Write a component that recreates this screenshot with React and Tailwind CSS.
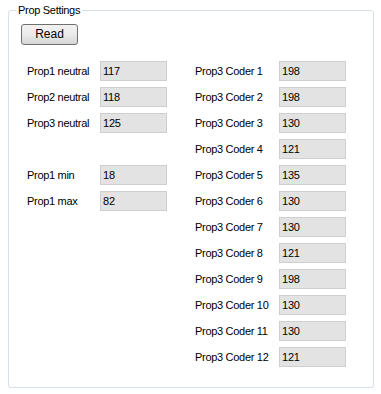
import React from 'react';

const leftRows = [
  { label: 'Prop1 neutral', value: '117' },
  { label: 'Prop2 neutral', value: '118' },
  { label: 'Prop3 neutral', value: '125' },
  null,
  { label: 'Prop1 min', value: '18' },
  { label: 'Prop1 max', value: '82' },
];

const coderValues = ['198', '198', '130', '121', '135', '130', '130', '121', '198', '130', '130', '121'];

// read-only WinForms style textbox
const Field = ({ label, value, labelWidth }) => (
  <div className="flex items-center h-[20px]">
    <span className={`${labelWidth} text-[11px] leading-[13px] tracking-[-0.3px] text-black`}>{label}</span>
    <div className="w-[67px] h-[20px] border border-[#cfcfcf] bg-[#e3e3e3] pl-[2px] text-[11px] leading-[18px] tracking-[-0.2px] text-black">
      {value}
    </div>
  </div>
);

export default function App() {
  return (
    <div className="w-[381px] h-[394px] bg-white pl-[8px] pr-[8px] pt-[4px]" style={{ fontFamily: '"Liberation Sans", Arial, sans-serif' }}>
      <fieldset className="w-[366px] h-[384px] border border-[#d5dfe5] rounded-[3px] px-[7px]">
        <legend className="px-[2px] text-[11px] leading-[13px] tracking-[-0.3px] text-black">Prop Settings</legend>

        <button className="mt-[7px] ml-[5px] w-[57px] h-[21px] border border-[#707070] rounded-[3px] bg-gradient-to-b from-[#f2f2f2] via-[#ebebeb] to-[#d6d6d6] text-[12px] leading-[13px] text-black">
          Read
        </button>

        <div className="flex mt-[16px] ml-[11px]">
          <div className="flex flex-col gap-[6px] w-[168px]">
            {leftRows.map((r, i) =>
              r ? <Field key={i} label={r.label} value={r.value} labelWidth="w-[73px]" /> : <div key={i} className="h-[20px]" />
            )}
          </div>
          <div className="flex flex-col gap-[6px]">
            {coderValues.map((v, i) => (
              <Field key={i} label={`Prop3 Coder ${i + 1}`} value={v} labelWidth="w-[84px]" />
            ))}
          </div>
        </div>
      </fieldset>
    </div>
  );
}
